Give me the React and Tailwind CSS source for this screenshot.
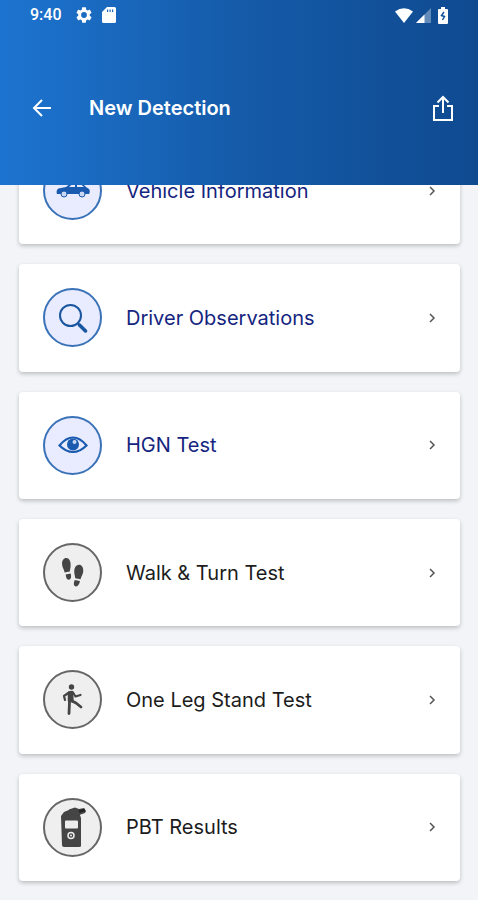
import React from "react";

function CarIcon() {
  return (
    <svg viewBox="0 0 36 18" className="w-9" fill="#1a5bb0" aria-hidden="true">
      <path d="M2 12c-1-3 0-6 4-6l5-1 5-4h11l4 4 3 2c1 1 1 4 0 5z" />
      <path d="M14 5l3-2.500h3V5zM22 2.500h4L29 5h-7z" fill="#e9ebff" />
      <circle cx="9" cy="12" r="3" fill="#c9d6f4" stroke="#1a5bb0" strokeWidth="1" />
      <circle cx="27" cy="12" r="3" fill="#c9d6f4" stroke="#1a5bb0" strokeWidth="1" />
    </svg>
  );
}

function SearchIcon() {
  return (
    <svg viewBox="0 0 30 30" className="w-[30px]" fill="none" stroke="#1a569f" aria-hidden="true">
      <circle cx="12.500" cy="12.500" r="10.500" strokeWidth="2" />
      <path d="M19.500 20l2.500 2.500" strokeWidth="2" />
      <path d="M21.500 22l6 6" strokeWidth="3.500" strokeLinecap="round" />
    </svg>
  );
}

function EyeIcon() {
  return (
    <svg viewBox="0 0 30 18" className="w-[30px]" aria-hidden="true">
      <path d="M1.500 9.500Q8 1.500 15 1.500T28.500 9.500Q22 16 15 16T1.500 9.500z" fill="#e9ebff" stroke="#1a5bb0" strokeWidth="2.200" />
      <circle cx="15" cy="8.500" r="6" fill="#1a5bb0" />
      <circle cx="16.500" cy="6" r="2" fill="#c9d6f4" />
    </svg>
  );
}

function StepsIcon() {
  return (
    <svg viewBox="1 1 23 28" className="h-[29px]" fill="#454545" aria-hidden="true">
      <path d="M6 1c3 0 4.500 3.500 4.300 7 0 3-.6 4-.8 6l-5 1C4 12 2 10 2 6.500 2 3.500 3.500 1 6 1z" />
      <path d="M5.500 17l4.800-1c1 3 .4 6-1.800 6S6 20 5.500 17z" />
      <path d="M18.500 7.500c-3 0-4.700 3-4.700 6.500 0 3 .8 4 .9 6.500l5.300 1c.4-3 2.500-4.500 2.500-8.500 0-3-1.500-5.500-4-5.500z" />
      <path d="M14.300 22.300l5 1c-.6 3-1.800 5.200-3.800 5.200-2.500 0-2.500-3.200-1.200-6.200z" />
    </svg>
  );
}

function WalkerIcon() {
  return (
    <svg viewBox="0 0 24 34" className="w-6" fill="none" stroke="#454545" strokeLinecap="round" strokeLinejoin="round" aria-hidden="true">
      <circle cx="10.500" cy="4" r="2.700" fill="#454545" stroke="none" />
      <path d="M8 9.500l3-.5.500 9H8z" fill="#454545" strokeWidth="2.500" />
      <path d="M8 9.500l-5 3.500 1 4M12 9.500l2.500 4 5-1.500" strokeWidth="2.200" />
      <path d="M8.500 18.500l-.500 12M11 18l4 2 5 4" strokeWidth="2.800" />
    </svg>
  );
}

function BreathalyzerIcon() {
  return (
    <svg viewBox="0 0 26 42" className="h-[42px]" fill="#454545" aria-hidden="true">
      <path d="M1 10l3-4 7-3q7-1 8 3l2 6v28q0 1-2 1H4q-2 0-2-2z" />
      <path d="M9 3.500L15 1.500l4 1.500 5-1 2 3-1 2-7 2.500L10 8z" />
      <path d="M19 5.500l6-1.500" stroke="#222222" strokeWidth="2.500" />
      <rect x="5" y="14.500" width="13" height="8" rx="1" fill="#ededed" />
      <circle cx="11" cy="29.500" r="3" fill="none" stroke="#ededed" strokeWidth="1.500" />
      <circle cx="11" cy="29.500" r="1" fill="#ededed" />
    </svg>
  );
}

const steps = [
  { label: "Vehicle Information", icon: CarIcon, done: true },
  { label: "Driver Observations", icon: SearchIcon, done: true },
  { label: "HGN Test", icon: EyeIcon, done: true },
  { label: "Walk & Turn Test", icon: StepsIcon, done: false },
  { label: "One Leg Stand Test", icon: WalkerIcon, done: false },
  { label: "PBT Results", icon: BreathalyzerIcon, done: false },
];

function StatusBar() {
  return (
    <div className="flex h-[30px] items-center justify-between pl-[30px] pr-[30px]">
      <div className="flex items-center gap-[14px]">
        <span className="font-[Roboto,sans-serif] text-base font-medium">9:40</span>
        <svg viewBox="2 2 20 20" className="size-4" fill="currentColor" aria-hidden="true">
          <path d="M19.140 12.940c.04-.3.06-.61.06-.94 0-.32-.02-.64-.07-.94l2.030-1.580c.18-.14.23-.41.12-.61l-1.920-3.320c-.12-.22-.37-.29-.59-.22l-2.390.96c-.5-.38-1.030-.7-1.620-.94l-.36-2.540c-.04-.24-.24-.41-.48-.41h-3.840c-.24 0-.43.17-.47.41l-.36 2.540c-.59.24-1.130.57-1.620.94l-2.390-.96c-.22-.08-.47 0-.59.22L2.740 8.870c-.12.21-.08.47.12.61l2.030 1.580c-.05.3-.09.63-.09.94s.02.64.07.94l-2.030 1.580c-.18.14-.23.41-.12.61l1.920 3.320c.12.22.37.29.59.22l2.390-.96c.5.38 1.030.7 1.620.94l.36 2.540c.05.24.24.41.48.41h3.840c.24 0 .44-.17.47-.41l.36-2.540c.59-.24 1.130-.56 1.620-.94l2.390.96c.22.08.47 0 .59-.22l1.920-3.320c.12-.22.07-.47-.12-.61zM12 15.600A3.600 3.600 0 1 1 12 8.400a3.600 3.600 0 0 1 0 7.200z" />
        </svg>
        <svg viewBox="0 0 14 16" className="-ml-1 h-4" fill="currentColor" aria-hidden="true">
          <path fillRule="evenodd" d="M5 0h7.500Q14 0 14 1.500v13q0 1.500-1.500 1.500h-11Q0 16 0 14.500V5zM5 2.500v2.500h1.200V2.500zM7.500 2.500v2.500h1.200V2.500zM10 2.500v2.500h1.200V2.500z" />
        </svg>
      </div>
      <div className="flex items-center gap-[3px]">
        <svg viewBox="0 0 18 15" className="w-[18px]" fill="currentColor" aria-hidden="true">
          <path d="M0 3.500Q9-3 18 3.500L9 15z" />
        </svg>
        <svg viewBox="0 0 15 15" className="w-[15px]" fill="currentColor" aria-hidden="true">
          <path d="M15 0v15H0z" opacity="0.350" />
          <path d="M8.500 6.500V15H0z" />
        </svg>
        <svg viewBox="0 0 10 17" className="ml-1 h-[17px]" aria-hidden="true">
          <path d="M3 0h4v2h2q1 0 1 1v13q0 1-1 1H1q-1 0-1-1V3q0-1 1-1h2z" fill="currentColor" />
          <path d="M6 5L3.500 8.500l3 1L4.500 13" fill="none" stroke="#10509a" strokeWidth="1.500" />
        </svg>
      </div>
    </div>
  );
}

function Header() {
  return (
    <header className="relative z-10 h-[185px] shrink-0 bg-linear-to-r from-[#1d74d0] via-[#155ba9] to-[#0f4a90] text-white">
      <StatusBar />
      <div className="flex items-center pt-16 pr-6 pl-8">
        <button type="button" aria-label="Back" className="mr-[37px]">
          <svg viewBox="0 0 20 20" className="size-5" fill="none" stroke="currentColor" strokeWidth="2" aria-hidden="true">
            <path d="M19 10H3M10 2l-8 8 8 8" />
          </svg>
        </button>
        <h1 className="flex-1 text-xl font-semibold">New Detection</h1>
        <button type="button" aria-label="Share">
          <svg viewBox="0 0 22 26" className="h-[26px]" fill="none" stroke="currentColor" strokeWidth="2" aria-hidden="true">
            <path d="M7 11H2v14h18V11h-5M11 18V2M5.500 7.500L11 2l5.500 5.500" />
          </svg>
        </button>
      </div>
    </header>
  );
}

function StepCard({ label, icon: Icon, done }) {
  return (
    <li className="flex min-h-24 flex-1">
      <button
        type="button"
        className="flex flex-1 items-center rounded-[4px] bg-white px-6 text-left shadow-[0_2px_4px_rgba(0,0,0,0.22)]"
      >
        <span
          className={
            done
              ? "mr-6 flex size-[59px] items-center justify-center rounded-full border-2 border-[#3a72b8] bg-[#e9ebff]"
              : "mr-6 flex size-[59px] items-center justify-center rounded-full border-2 border-[#666666] bg-[#efefef]"
          }
        >
          <Icon />
        </span>
        <span className={done ? "flex-1 text-xl text-[#15257f]" : "flex-1 text-xl text-[#1c1c1c]"}>{label}</span>
        <svg viewBox="0 0 8 10" className="h-[10px]" fill="none" stroke="#555555" strokeWidth="1.500" aria-hidden="true">
          <path d="M2 1l4 4-4 4" />
        </svg>
      </button>
    </li>
  );
}

export default function App() {
  return (
    <div className="flex h-screen flex-col overflow-hidden bg-[#f2f4f7] font-[Inter,sans-serif]">
      <Header />
      <main className="-mt-12 flex min-h-0 flex-1 flex-col pr-[18px] pb-[19px] pl-[19px]">
        <ul className="flex flex-1 flex-col gap-5">
          {steps.map((step) => (
            <StepCard key={step.label} {...step} />
          ))}
        </ul>
      </main>
    </div>
  );
}
